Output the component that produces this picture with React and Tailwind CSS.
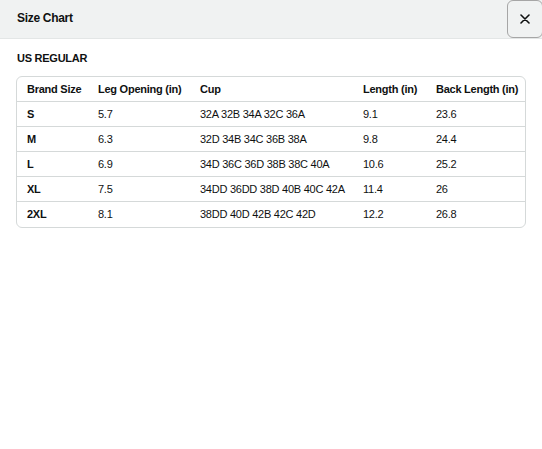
import React from 'react';

const rows = [
  ['S', '5.7', '32A 32B 34A 32C 36A', '9.1', '23.6'],
  ['M', '6.3', '32D 34B 34C 36B 38A', '9.8', '24.4'],
  ['L', '6.9', '34D 36C 36D 38B 38C 40A', '10.6', '25.2'],
  ['XL', '7.5', '34DD 36DD 38D 40B 40C 42A', '11.4', '26'],
  ['2XL', '8.1', '38DD 40D 42B 42C 42D', '12.2', '26.8'],
];

const headers = ['Brand Size', 'Leg Opening (in)', 'Cup', 'Length (in)', 'Back Length (in)'];

const cols = 'grid grid-cols-[71px_102px_163px_73px_99px]';

const App = () => {
  return (
    <div className="w-[542px] h-[449px] bg-white text-[#0f1111] font-['Liberation_Sans',Arial,sans-serif]">
      {/* header bar */}
      <div className="h-[39px] bg-[#f0f2f2] border-b border-[#e3e6e6] flex items-center justify-between">
        <h1 className="pl-[17px] pb-[2px] text-[12px] font-bold leading-none tracking-[-0.3px]">Size Chart</h1>
        <button className="w-[36px] h-[38px] -mr-[1px] self-start border border-[#a6a6a6] rounded-[6px] flex items-center justify-center bg-[#f0f2f2]">
          <svg width="10" height="10" viewBox="0 0 10 10">
            <path d="M1 1L9 9M9 1L1 9" stroke="#0f1111" strokeWidth="1.6" strokeLinecap="round" />
          </svg>
        </button>
      </div>

      <div className="px-[16px] pt-[13px] tracking-[-0.25px]">
        <div className="text-[11px] font-bold leading-[13px] pl-[1px]">US REGULAR</div>

        <div className="mt-[11px] w-[510px] border border-[#d5d9d9] rounded-[6px] text-[11px]">
          <div className={`${cols} h-[25px] items-center font-bold border-b border-[#d5d9d9]`}>
            {headers.map((h) => (
              <div key={h} className="pl-[10px] whitespace-nowrap">{h}</div>
            ))}
          </div>
          {rows.map((r, i) => (
            <div
              key={r[0]}
              className={`${cols} h-[25px] items-center ${i < rows.length - 1 ? 'border-b border-[#d5d9d9]' : ''}`}
            >
              {r.map((c, j) => (
                <div key={j} className={`pl-[10px] whitespace-nowrap ${j === 0 ? 'font-bold' : ''}`}>{c}</div>
              ))}
            </div>
          ))}
        </div>
      </div>
    </div>
  );
};

export default App;
